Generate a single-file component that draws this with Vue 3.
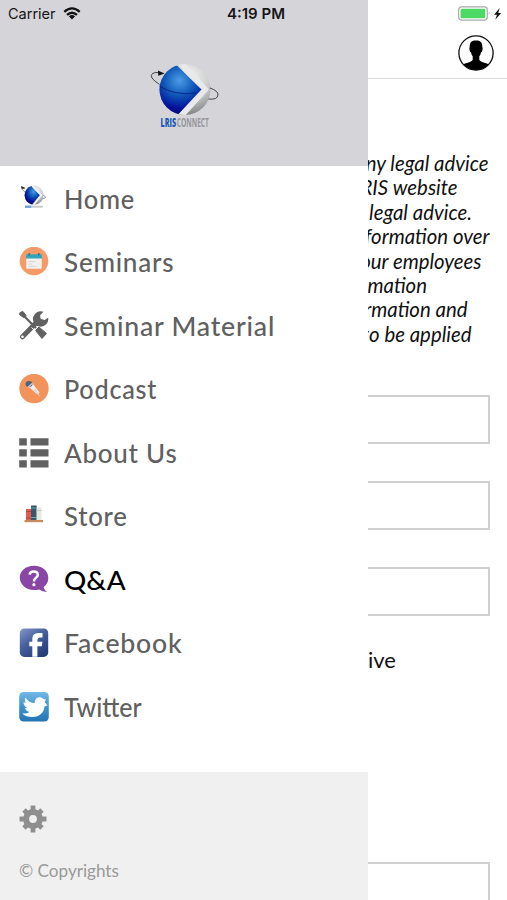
<script setup>
const menu = [
  { icon: 'home', label: 'Home', spacing: 0.8, stretch: 0.925 },
  { icon: 'calendar', label: 'Seminars', spacing: 0.8, stretch: 0.948 },
  { icon: 'tools', label: 'Seminar Material', spacing: 0.8, stretch: 0.97 },
  { icon: 'podcast', label: 'Podcast', spacing: 0.8, stretch: 0.918 },
  { icon: 'list', label: 'About Us', spacing: 0.8, stretch: 0.945 },
  { icon: 'store', label: 'Store', spacing: 0.8, stretch: 0.935 },
  { icon: 'question', label: 'Q&A', spacing: 0, stretch: 1.01, active: true },
  { icon: 'facebook', label: 'Facebook', spacing: 0.8, stretch: 0.97 },
  { icon: 'twitter', label: 'Twitter', spacing: 0, stretch: 0.905 },
]

// Visible width of each disclaimer line beside the open drawer
const lines = [
  { text: 'any legal advice', width: 120.5 },
  { text: 'LRIS website', width: 89.5 },
  { text: 'legal advice.', width: 104 },
  { text: 'information over', width: 121.5 },
  { text: 'our employees', width: 113.5 },
  { text: 'information', width: 59 },
  { text: 'information and', width: 99.5 },
  { text: 'to be applied', width: 103.5 },
]
</script>

<template>
  <div class="screen">
    <header class="status">
      <div class="carrier">
        <span>Carrier</span>
        <svg width="18" height="13" viewBox="0 0 18 13">
          <g fill="none" stroke="#111" stroke-width="2.3">
            <path d="M1.3 4.8Q9-2 16.7 4.8" />
            <path d="M4 7.9Q9 3.5 14 7.9" />
          </g>
          <path d="M5.9 9.3Q9 6.8 12.1 9.3L9 12.5Z" fill="#111" />
        </svg>
      </div>
      <span class="time">4:19 PM</span>
      <div class="power">
        <svg width="44" height="16" viewBox="0 0 44 16">
          <rect x=".7" y=".9" width="28.600" height="13.200" rx="3" fill="#fff" stroke="#aaa" stroke-width="1.200" />
          <rect x="2.600" y="2.700" width="24.600" height="9.600" rx="1" fill="#4cd964" />
          <path d="M30.800 5.300q1.800 2.200 0 4.400z" fill="#aaa" />
          <path d="M41.700 2 36 8.700h3L37.200 13.700 43.200 6.900h-3z" fill="#111" />
        </svg>
      </div>
    </header>

    <aside class="drawer">
      <div class="brand">
        <svg class="logo" width="70" height="70" viewBox="0 0 70 70">
          <defs>
            <radialGradient id="silver" cx=".6" cy=".25" r=".8">
              <stop offset="0" stop-color="#f4f4f4" />
              <stop offset=".5" stop-color="#c9cacb" />
              <stop offset="1" stop-color="#77797b" />
            </radialGradient>
            <radialGradient id="blue" cx=".58" cy=".3" r=".72">
              <stop offset="0" stop-color="#4d9ce5" />
              <stop offset=".4" stop-color="#1059b8" />
              <stop offset=".75" stop-color="#04129c" />
              <stop offset="1" stop-color="#02056e" />
            </radialGradient>
            <clipPath id="ball"><circle cx="36" cy="27.500" r="25.500" /></clipPath>
          </defs>
          <circle cx="36" cy="27.500" r="25.500" fill="url(#silver)" />
          <g clip-path="url(#ball)">
            <path d="M27 0 35 0 60 27.500 34 56 26 56 52 27.500Z" fill="#e9e9ea" />
            <path d="M28 3.500 52.500 27.500 29.500 52 0 54V3.500Z" fill="url(#blue)" />
            <path d="M10 24Q26 34 47 31" fill="none" stroke="#031075" stroke-width=".7" />
          </g>
          <path d="M10.500 22.500Q-1 15 3.500 11.500Q6.500 9.500 10.500 11M61 26Q69.500 29 69 33Q68.500 38 59.500 37" fill="none" stroke="#444" stroke-width="1" />
          <path d="M9 8.500 15.500 11.400 9.300 13.800Z" fill="#111" />
          <text x="11.500" y="64.500" font-family="'Open Sans', 'Liberation Sans', sans-serif" font-size="11.500" font-weight="800" fill="#1a59b5" textLength="15.500" lengthAdjust="spacingAndGlyphs">LRIS</text>
          <text x="27.700" y="64.500" font-family="'Open Sans', 'Liberation Sans', sans-serif" font-size="11.500" font-weight="700" fill="#96979b" textLength="32.300" lengthAdjust="spacingAndGlyphs">CONNECT</text>
        </svg>
      </div>

      <nav class="menu">
        <a v-for="item in menu" :key="item.label" class="item" :class="{ active: item.active }">
          <svg class="icon" width="30" height="30" viewBox="0 0 30 30">
            <g v-if="item.icon === 'home'">
              <path d="M6 8Q1 4 3 3L6 4.500M24 11Q29 14 24 14.500" fill="none" stroke="#777" stroke-width=".8" />
              <path d="M2 2 6.500 4 3 5Z" fill="#222" />
              <circle cx="15" cy="11.200" r="9.600" fill="url(#silver)" />
              <path d="M12.500 2 21 11 13 20.500A9.600 9.600 0 0 1 12.500 2Z" fill="url(#blue)" />
              <path d="M13.200 1.800 22.200 11.200 14.500 20.700" fill="none" stroke="#f3f3f3" stroke-width="1.800" />
              <path d="M6 22.700h6.500" stroke="#6f9fdd" stroke-width="2.400" />
              <path d="M12.800 22.700h11" stroke="#c9c9cc" stroke-width="2" />
            </g>
            <g v-else-if="item.icon === 'calendar'">
              <circle cx="15" cy="14" r="14.300" fill="#f69a68" />
              <rect x="7.200" y="8.400" width="15.600" height="13.400" rx="1" fill="#f1f1ef" />
              <path d="M7 11.500V8.500Q7 7.200 8.300 7.200H21.700Q23 7.200 23 8.500V11.500Z" fill="#35a5bd" />
              <path d="M10.200 6v2.500M19.800 6v2.500" stroke="#376b79" stroke-width="1.400" />
              <path d="M9.500 14.500h7M9.500 17h4M9.500 19.300h8" stroke="#d7d5d0" stroke-width="1" />
            </g>
            <g v-else-if="item.icon === 'tools'">
              <path d="M3.500 3.500 17 17" stroke="#616161" stroke-width="2.200" />
              <path d="M1 1.500 4 .5 7 4.500 6.500 6.500 4.500 6.500 .5 3.500Z" fill="#616161" stroke="#616161" stroke-linejoin="round" />
              <path d="M16.500 19.500 20 16 27.500 22.500 23 27.500Z" fill="#616161" stroke="#616161" stroke-linejoin="round" />
              <path d="M3.500 25.800 18 11" stroke="#616161" stroke-width="5" stroke-linecap="round" />
              <path d="M24.500 .8A7.700 7.700 0 1 0 29.200 6.700L25.500 9 21.500 7.700 21.200 4Z" fill="#616161" />
              <circle cx="3.500" cy="25.800" r="1.300" fill="#fff" />
              <path d="M12.500 16.500 16.500 20.200" stroke="#fff" stroke-width="1" />
            </g>
            <g v-else-if="item.icon === 'podcast'">
              <circle cx="15" cy="14.500" r="14.700" fill="#f1935a" />
              <path d="M9 12.200 13 8.800 20.500 18.500 18.300 20.300Z" fill="#f7eee8" />
              <path d="M16.500 14.500 20.300 20.400 18 20.300 14 16.200Z" fill="#e1dad7" />
              <ellipse cx="10" cy="10" rx="3.500" ry="2.900" fill="#526378" />
              <path d="M9 13.200 13.500 9.200" stroke="#c7d0da" stroke-width="1.200" />
              <path d="m19 20 1.800 2.400" stroke="#e7c5b4" stroke-width="1" />
            </g>
            <g v-else-if="item.icon === 'list'" fill="#616161">
              <path d="M.2.200h7.600v7.300H.200zM11.500.200h18v7.300h-18zM.2 11.300h7.600v7.200H.200zM11.500 11.300h18v7.200h-18zM.2 22.300h7.600v7.200H.200zM11.500 22.300h18v7.200h-18z" />
            </g>
            <g v-else-if="item.icon === 'store'">
              <rect x="7" y="8" width="5" height="11.500" fill="#e45b52" />
              <rect x="12" y="4.500" width="5.700" height="15" fill="#34596d" />
              <path d="M12 7h5.700M12 16.500h5.700" stroke="#5aaab5" />
              <path d="M7 10.500h5M7 17h5" stroke="#b5413e" />
              <rect x="17.700" y="6.500" width="4.800" height="13" fill="#e8e6df" />
              <path d="M17.700 9.500h4.800" stroke="#bdccca" />
              <rect x="5.500" y="19" width="18.500" height="2.200" fill="#c98b5e" />
            </g>
            <g v-else-if="item.icon === 'question'">
              <path d="M15 .7C6.500.7.8 6 .8 12.500S6.500 25 15 25Q18.500 25 20 24.500 23.500 26.500 28 27 25.500 25 24.500 22.200 29.300 19 29.300 12.500C29.300 6 23.500.7 15 .7Z" fill="#8a46a5" />
              <path d="M10.600 9.700Q11 6.400 14.800 6.400 18.800 6.400 18.800 9.800 18.800 11.700 16.700 13 14.900 14.200 14.900 16.500" fill="none" stroke="#fff" stroke-width="2.500" />
              <circle cx="14.900" cy="19.700" r="1.600" fill="#fff" />
            </g>
            <g v-else-if="item.icon === 'facebook'">
              <defs>
                <linearGradient id="fb" x2=".7" y2="1">
                  <stop stop-color="#8497c9" />
                  <stop offset=".45" stop-color="#49639f" />
                  <stop offset="1" stop-color="#263d7c" />
                </linearGradient>
              </defs>
              <rect x=".8" y=".5" width="28.400" height="28.400" rx="4.500" fill="url(#fb)" />
              <path d="M13.300 28.700V18.200H10.300V13.700H13.300V11Q13.300 5 19.300 5H23.500V9.500H20.800Q18.400 9.500 18.400 12V13.700H23.400L22.800 18.200H18.400V28.700Z" fill="#fff" />
            </g>
            <g v-else>
              <defs>
                <linearGradient id="tw" x2="0" y2="1">
                  <stop stop-color="#74b9e7" />
                  <stop offset=".5" stop-color="#3e94ce" />
                  <stop offset="1" stop-color="#2474b1" />
                </linearGradient>
              </defs>
              <rect x=".2" y="0" width="29.600" height="29.600" rx="4.500" fill="url(#tw)" />
              <path d="M6.500 5.500Q10 11 15.500 11.200 15.800 5.300 21 5.300 23.200 5.300 24.500 7L27 7.500 25.500 10 28.500 13.500 25.500 14.500C25 20.500 20.500 25 13.500 25Q7 25 3 21.500 7.500 22 10.500 20 7 19.500 6 16L8 15.800Q4.500 14 4.500 10.200L6.600 10.700Q5 8.500 6.500 5.500Z" fill="#fff" />
            </g>
          </svg>
          <span class="label" :style="{ letterSpacing: item.spacing + 'px', transform: `scaleX(${item.stretch})` }">{{ item.label }}</span>
        </a>
      </nav>

      <footer class="foot">
        <svg width="28" height="28" viewBox="0 0 28 28">
          <g fill="none" stroke="#8f8f8f">
            <circle cx="14" cy="14" r="6.900" stroke-width="6" />
            <path d="M14 .5v5M14 22.500v5M.5 14h5M22.500 14h5M5 5l3 3M20 20l3 3M23 5l-3 3M8 20l-3 3" stroke-width="4.800" />
          </g>
        </svg>
        <span>© Copyrights</span>
      </footer>
    </aside>

    <main class="page">
      <div class="topbar">
        <svg width="36" height="36" viewBox="0 0 36 36">
          <defs><clipPath id="avatar"><circle cx="18" cy="18" r="17" /></clipPath></defs>
          <circle cx="18" cy="18" r="17.100" fill="#fff" stroke="#111" stroke-width="1.300" />
          <path clip-path="url(#avatar)" d="M18 5.500C13.500 5.500 11.500 7.700 11.700 12 11 13.500 11.500 16.500 13 17.500Q13.500 20 14.700 21.300V25Q13 27 7 28.500 4 29.500 3 36H33Q32 29.500 29 28.500 23 27 21.300 25V21.300Q22.500 20 23 17.500C24.500 16.500 25 13.500 24.300 12 24.500 7.700 22.500 5.500 18 5.500Z" fill="#000" />
        </svg>
      </div>
      <div class="notice">
        <div v-for="line in lines" :key="line.text + line.width" class="line" :style="{ width: line.width + 'px' }">{{ line.text }}</div>
      </div>
      <div class="fields">
        <div class="field"></div>
        <div class="field"></div>
        <div class="field"></div>
      </div>
      <div class="option">ive</div>
      <div class="field"></div>
    </main>
  </div>
</template>

<style>
body { margin: 0; overflow: hidden; }
</style>

<style scoped>
.screen {
  position: relative;
  display: grid;
  grid-template-columns: 368px 139px;
  width: 507px;
  height: 900px;
  overflow: hidden;
  background: #fff;
  font-family: Lato, sans-serif;
}
.status {
  position: absolute;
  inset: 0 0 auto;
  z-index: 1;
  display: grid;
  grid-template-columns: 1fr auto 1fr;
  align-items: center;
  height: 27px;
  padding: 0 5px 0 8px;
  font: 15px/27px Inter, sans-serif;
  color: #161616;
}
.carrier { display: flex; align-items: center; gap: 7px; font-size: 14.5px; }
.time { padding-left: 2px; font-weight: 600; }
.power { display: flex; justify-content: flex-end; }
.drawer { display: flex; flex-direction: column; background: #fff; }
.brand {
  display: flex;
  justify-content: center;
  box-sizing: border-box;
  height: 166px;
  padding-top: 62px;
  background: #d5d4d9;
}
.logo { display: block; }
.menu { display: flex; flex-direction: column; height: 604.5px; padding-top: 1px; }
.item {
  display: flex;
  align-items: center;
  gap: 15px;
  height: 63.5px;
  padding-left: 19px;
  color: #606060;
}
.icon { flex: none; }
.label {
  font-size: 27.5px;
  line-height: 34px;
  font-weight: 500;
  white-space: nowrap;
  transform-origin: left center;
}
.active { color: #000; }
.foot {
  display: flex;
  flex: 1;
  flex-direction: column;
  gap: 27px;
  padding: 33px 19px 0;
  background: #f0f0f0;
  color: #999;
  font-size: 17.1px;
  line-height: 22px;
}
.page { overflow: hidden; }
.topbar {
  display: flex;
  justify-content: flex-end;
  box-sizing: border-box;
  height: 79px;
  padding: 35px 13px 0 0;
  border-bottom: 1px solid #dadada;
}
.notice { height: 196.2px; padding-top: 72px; }
.line {
  display: flex;
  justify-content: flex-end;
  overflow: hidden;
  height: 24.4px;
  color: #111;
  font-size: 20.4px;
  font-style: italic;
  line-height: 24.4px;
  white-space: nowrap;
}
.fields { display: grid; gap: 37px; padding-top: 48px; }
.field {
  box-sizing: border-box;
  width: 122px;
  height: 49px;
  border: 2px solid #d0d0d0;
  border-left: 0;
}
.option {
  box-sizing: border-box;
  height: 246px;
  padding-top: 44px;
  color: #111;
  font-size: 22px;
  line-height: 0;
}
</style>
